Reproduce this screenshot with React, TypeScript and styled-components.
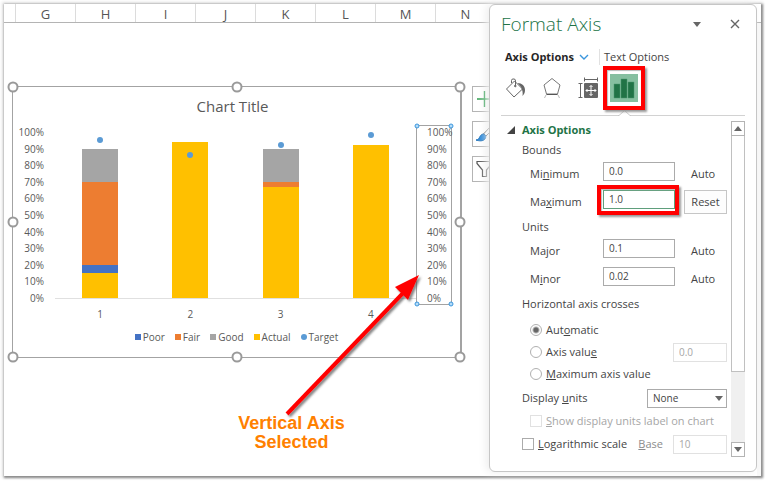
import React, { useState } from "react";
import styled, { createGlobalStyle, css } from "styled-components";

const GlobalStyle = createGlobalStyle`
  *, *::before, *::after { box-sizing: border-box; }
  body {
    margin: 0;
    background: #fff;
    color: #444;
    font-family: "Open Sans", "Noto Sans", sans-serif;
    font-size: 11px;
    line-height: 16px;
  }
  button, input, select { font: inherit; color: inherit; margin: 0; }
`;

/* ---------- window and worksheet ---------- */

const Page = styled.div`
  display: flex;
  min-height: 100vh;
  padding: 4px 7px 7px 4px;
`;

const Frame = styled.main`
  flex: 1;
  display: grid;
  grid-template-columns: minmax(0, 1fr) 268px 4px;
  grid-template-rows: 19px 1fr;
  background: #fff;
  box-shadow: 1px 1px 2px 1px #8c8c8c, 0 0 3px 2px #e4e4e4;
`;

const ColumnHeaders = styled.div`
  grid-area: 1 / 1 / 2 / 4;
  display: flex;
  overflow: hidden;
  border-bottom: 1px solid #b4b4b4;
`;

const ColumnHeader = styled.div<{ $narrow?: boolean }>`
  flex: 0 0 ${(p) => (p.$narrow ? "12px" : "60px")};
  border-right: 1px solid #dcdcdc;
  color: #555;
  font-size: 13px;
  line-height: 20px;
  text-align: center;
`;

const Sheet = styled.section`
  grid-area: 2 / 1 / 3 / 2;
  overflow: hidden;
  padding: 63px 0 0 8px;
`;

const ChartRow = styled.div`
  display: flex;
  gap: 10px;
`;

const ChartFrame = styled.figure`
  position: relative;
  flex: 1;
  margin: 0;
  border: 1px solid #a3a3a3;
  border-right-width: 2px;
  padding: 7px 8px 12px 0;
  background: #fff;
  color: #595959;
  font-size: 10px;
`;

const Handle = styled.span<{ $x: string; $y: string; $small?: boolean }>`
  position: absolute;
  left: ${(p) => p.$x};
  top: ${(p) => p.$y};
  width: ${(p) => (p.$small ? "5px" : "11px")};
  height: ${(p) => (p.$small ? "5px" : "11px")};
  transform: translate(-50%, -50%);
  border: ${(p) => (p.$small ? "1px solid #3a96dd" : "2px solid #9a9a9a")};
  border-radius: 50%;
  background: ${(p) => (p.$small ? "#b5dcf8" : "#fff")};
`;

const ChartTitle = styled.figcaption`
  margin-bottom: 7px;
  font-size: 15px;
  line-height: 24px;
  text-align: center;
`;

const PlotRow = styled.div`
  display: flex;
  height: 180px;
`;

const AxisLabels = styled.div<{ $selected?: boolean }>`
  position: relative;
  display: flex;
  flex-direction: column;
  justify-content: space-between;
  line-height: 12px;
  ${(p) =>
    p.$selected
      ? css`
          width: 36px;
          padding-left: 10px;
          border: 1px solid #a3a3a3;
        `
      : css`
          width: 31px;
          padding: 1px 0;
          text-align: right;
        `}
`;

const Plot = styled.div`
  flex: 1;
  display: grid;
  grid-template-columns: repeat(4, 1fr);
  margin: 7px 0 6px 11px;
  border-bottom: 1px solid #e0e0e0;
`;

const Category = styled.div`
  position: relative;
  display: flex;
  flex-direction: column;
  justify-content: flex-end;
  align-items: center;
`;

const Segment = styled.div<{ $fill: string }>`
  width: 40%;
  background: ${(p) => p.$fill};
`;

const Marker = styled.span`
  position: absolute;
  left: 50%;
  width: 6px;
  height: 6px;
  margin: 0 0 -3px -3px;
  border-radius: 50%;
  background: #5b9bd5;
`;

const CategoryLabels = styled.div`
  display: grid;
  grid-template-columns: repeat(4, 1fr);
  padding: 0 36px 0 42px;
  line-height: 18px;
  text-align: center;
`;

const Legend = styled.div`
  display: flex;
  justify-content: center;
  gap: 10px;
  margin-top: 6px;
  padding-left: 8px;
  line-height: 16px;
`;

const LegendItem = styled.span<{ $fill: string; $round?: boolean }>`
  display: flex;
  align-items: center;
  gap: 2px;
  &::before {
    content: "";
    width: 6px;
    height: 6px;
    border-radius: ${(p) => (p.$round ? "50%" : "0")};
    background: ${(p) => p.$fill};
  }
`;

const Arrow = styled.svg`
  position: absolute;
  right: 30px;
  top: 180px;
  z-index: 1;
  overflow: visible;
`;

const Note = styled.p`
  margin: 56px 0 0;
  padding-left: 82px;
  color: #ff8000;
  font: bold 18px/19px "Liberation Sans", Arial, sans-serif;
  text-align: center;
`;

const ChartTools = styled.div`
  flex: 0 0 17px;
  min-width: 0;
  display: flex;
  flex-direction: column;
  align-items: flex-start;
  gap: 9px;
`;

const ToolButton = styled.button`
  width: 26px;
  height: 26px;
  padding: 0;
  border: 1px solid #b4b4b4;
  background: #fff;
  line-height: 0;
  text-align: left;
`;

/* ---------- format pane ---------- */

const Pane = styled.aside`
  grid-area: 1 / 2 / 3 / 3;
  z-index: 2;
  display: flex;
  flex-direction: column;
  margin-bottom: 4px;
  padding: 0 11px 14px;
  border: 1px solid #c6c6c6;
  border-radius: 6px;
  background: #fff;
  box-shadow: -3px 0 8px #eee;
`;

const Gutter = styled.div`
  grid-area: 2 / 3 / 3 / 4;
  background: #f8f8f8;
`;

const PaneHeader = styled.header`
  display: flex;
  align-items: center;
  height: 40px;
  padding-bottom: 2px;
`;

const PaneTitle = styled.h1`
  flex: 1;
  margin: 0;
  color: #217346;
  font-size: 19px;
  font-weight: 300;
  line-height: 28px;
`;

const PlainButton = styled.button`
  display: grid;
  place-items: center;
  width: 20px;
  height: 20px;
  padding: 0;
  border: 0;
  background: none;
`;

const HeaderButtons = styled.div`
  display: flex;
  gap: 18px;
`;

const Tabs = styled.nav`
  display: flex;
  align-items: center;
  height: 24px;
  padding-left: 4px;
`;

const Tab = styled.button<{ $active?: boolean }>`
  display: flex;
  align-items: center;
  gap: 5px;
  padding: 0;
  border: 0;
  background: none;
  color: ${(p) => (p.$active ? "#262626" : "#444")};
  font-weight: ${(p) => (p.$active ? 700 : 400)};
  line-height: 16px;
  & + & {
    margin-left: 10px;
    padding-left: 4px;
    border-left: 1px solid #e1e1e1;
  }
`;

const IconRow = styled.div`
  display: flex;
  align-items: center;
  gap: 8px;
  height: 41px;
  padding: 0 0 3px 1px;
`;

const IconButton = styled.button<{ $active?: boolean }>`
  display: block;
  width: 28px;
  height: 28px;
  padding: 0;
  border: 0;
  background: ${(p) => (p.$active ? "#86bfa0" : "none")};
  line-height: 0;
`;

const Highlight = styled.div<{ $gap: string }>`
  position: relative;
  &::after {
    content: "";
    position: absolute;
    inset: ${(p) => p.$gap};
    border: 4px solid #f00;
    box-shadow: 2px 2px 2px #999, inset 1px 1px 1px #bbb;
    pointer-events: none;
  }
`;

const Divider = styled.div`
  display: flex;
  align-items: flex-end;
  height: 6px;
  margin-bottom: 5px;
  &::before, &::after {
    content: "";
    flex: 0 0 117px;
    height: 1px;
    background: #d2d2d2;
  }
  &::after { flex: 1; }
`;

const PaneBody = styled.div`
  flex: 1;
  display: flex;
  gap: 4px;
`;

const Options = styled.form`
  flex: 1;
  padding-left: 21px;
`;

const Heading = styled.h2`
  display: flex;
  align-items: center;
  gap: 7px;
  margin: 0 0 0 -15px;
  color: #217346;
  font-size: 11px;
  line-height: 18px;
`;

const Caption = styled.div`
  line-height: 21px;
`;

const FieldRow = styled.div`
  display: grid;
  grid-template-columns: 1fr 72px 52px;
  align-items: center;
  height: 28px;
  padding-left: 8px;
`;

const TextBox = styled.input<{ $focused?: boolean }>`
  display: block;
  width: 100%;
  height: 19px;
  padding: 0 5px;
  border: 1px solid ${(p) => (p.$focused ? "#5f9f7c" : "#ababab")};
  border-radius: 0;
  background: #fff;
  font-size: 10px;
  outline: none;
  &:disabled { border-color: #e1e1e1; color: #a6a6a6; }
`;

const FieldBox = styled.div`
  padding-bottom: 6px;
`;

const Status = styled.span`
  padding-left: 16px;
`;

const ResetButton = styled.button`
  height: 24px;
  margin-left: 9px;
  padding: 0;
  border: 1px solid #c6c6c6;
  background: #fdfdfd;
`;

const Choices = styled.fieldset`
  margin: 0;
  padding: 0 0 0 8px;
  border: 0;
`;

const ChoicesTitle = styled.legend`
  margin-left: -8px;
  padding: 0 0 5px;
  line-height: 21px;
`;

const Line = styled.div<{ $height: number; $indent?: boolean }>`
  display: flex;
  align-items: center;
  justify-content: space-between;
  height: ${(p) => p.$height}px;
  padding-left: ${(p) => (p.$indent ? "8px" : "0")};
`;

const Choice = styled.label<{ $dim?: boolean }>`
  display: flex;
  align-items: center;
  gap: 4px;
  color: ${(p) => (p.$dim ? "#a6a6a6" : "#444")};
  white-space: nowrap;
`;

const Radio = styled.input`
  appearance: none;
  width: 12px;
  height: 12px;
  border: 1px solid #b0b0b0;
  border-radius: 50%;
  background: #fff;
  &:checked { background: radial-gradient(circle, #666 0 2px, #fff 4px); }
`;

const Check = styled.input`
  appearance: none;
  width: 12px;
  height: 12px;
  border: 1px solid #ababab;
  background: #fff;
  &:disabled { border-color: #e1e1e1; }
`;

const SmallField = styled.div`
  width: 54px;
`;

const BaseLabel = styled.label`
  margin-left: auto;
  margin-right: 10px;
  color: #8c8c8c;
`;

const SelectBox = styled.div`
  display: grid;
  width: 80px;
  align-items: center;
  & > * { grid-area: 1 / 1; }
  & > svg { justify-self: end; margin-right: 4px; pointer-events: none; }
`;

const Select = styled.select`
  appearance: none;
  height: 19px;
  padding: 0 5px;
  border: 1px solid #ababab;
  border-radius: 0;
  background: #fff;
  font-size: 10px;
`;

const ScrollBar = styled.div`
  flex: 0 0 14px;
  display: flex;
  flex-direction: column;
  background: #f0f0f0;
`;

const ScrollTrack = styled.div`
  flex: 1;
  display: flex;
  flex-direction: column;
`;

const ScrollThumb = styled.div`
  flex: 0 0 77%;
  border: 1px solid #c0c0c0;
  border-top: 0;
  background: #fff;
`;

const ScrollButton = styled.button`
  display: grid;
  place-items: center;
  height: 15px;
  padding: 0;
  border: 1px solid #b4b4b4;
  background: #fff;
`;

const Triangle = ({ up }: { up?: boolean }) => (
  <svg width="8" height="5" viewBox="0 0 8 5" fill="#666" aria-hidden="true">
    <path d={up ? "M0 5L4 0L8 5Z" : "M0 0H8L4 5Z"} />
  </svg>
);

const BLUE = "#4472c4";
const ORANGE = "#ed7d31";
const GRAY = "#a5a5a5";
const GOLD = "#ffc000";

const letters = ["G", "H", "I", "J", "K", "L", "M", "N"];
const ticks = [100, 90, 80, 70, 60, 50, 40, 30, 20, 10, 0];

const categories = [
  { target: 95, parts: [[GRAY, 20], [ORANGE, 50], [BLUE, 5], [GOLD, 15]] },
  { target: 86, parts: [[GOLD, 94]] },
  { target: 92, parts: [[GRAY, 20], [ORANGE, 3], [GOLD, 67]] },
  { target: 98, parts: [[GOLD, 92]] },
] as { target: number; parts: [string, number][] }[];

const frameHandles = [
  ["0%", "0%"], ["50%", "0%"], ["100%", "0%"],
  ["0%", "50%"], ["100%", "50%"],
  ["0%", "100%"], ["50%", "100%"], ["100%", "100%"],
];

const axisHandles = [["0%", "0%"], ["100%", "0%"], ["0%", "100%"], ["100%", "100%"]];

function Chart() {
  return (
    <ChartFrame>
      <ChartTitle>Chart Title</ChartTitle>
      <PlotRow>
        <AxisLabels>
          {ticks.map((t) => <span key={t}>{t}%</span>)}
        </AxisLabels>
        <Plot>
          {categories.map((c, i) => (
            <Category key={i}>
              {c.parts.map(([fill, size], j) => (
                <Segment key={j} $fill={fill} style={{ height: `${size}%` }} />
              ))}
              <Marker style={{ bottom: `${c.target}%` }} />
            </Category>
          ))}
        </Plot>
        <AxisLabels $selected>
          {ticks.map((t) => <span key={t}>{t}%</span>)}
          {axisHandles.map(([x, y]) => <Handle key={x + y} $x={x} $y={y} $small />)}
        </AxisLabels>
      </PlotRow>
      <CategoryLabels>
        {categories.map((_, i) => <span key={i}>{i + 1}</span>)}
      </CategoryLabels>
      <Legend>
        <LegendItem $fill={BLUE}>Poor</LegendItem>
        <LegendItem $fill={ORANGE}>Fair</LegendItem>
        <LegendItem $fill={GRAY}>Good</LegendItem>
        <LegendItem $fill={GOLD}>Actual</LegendItem>
        <LegendItem $fill="#5b9bd5" $round>Target</LegendItem>
      </Legend>
      {frameHandles.map(([x, y]) => <Handle key={x + y} $x={x} $y={y} />)}
      <Arrow width="144" height="148" viewBox="0 0 144 148" aria-hidden="true">
        <defs>
          <filter id="arrow-shadow" x="-10%" y="-10%" width="130%" height="130%">
            <feDropShadow dx="2" dy="2" stdDeviation="1.2" floodColor="#555" floodOpacity="0.7" />
          </filter>
        </defs>
        <g filter="url(#arrow-shadow)">
          <path d="M1 147L120 23" stroke="#f00" strokeWidth="4" />
          <path d="M133 8L109 20L122 33Z" fill="#f00" />
        </g>
      </Arrow>
    </ChartFrame>
  );
}

export default function App() {
  const [minimum, setMinimum] = useState("0.0");
  const [maximum, setMaximum] = useState("1.0");
  const [major, setMajor] = useState("0.1");
  const [minor, setMinor] = useState("0.02");
  const [cross, setCross] = useState("auto");
  const [log, setLog] = useState(false);

  return (
    <Page>
      <GlobalStyle />
      <Frame>
        <ColumnHeaders>
          <ColumnHeader $narrow />
          {letters.map((l) => <ColumnHeader key={l}>{l}</ColumnHeader>)}
        </ColumnHeaders>
        <Sheet>
          <ChartRow>
            <Chart />
            <ChartTools>
              <ToolButton aria-label="Chart elements">
                <svg width="24" height="24" viewBox="0 0 24 24" fill="none" stroke="#2f9e4f" strokeWidth="1.4">
                  <path d="M4 12H19M11.500 4V20" />
                </svg>
              </ToolButton>
              <ToolButton aria-label="Chart styles">
                <svg width="24" height="24" viewBox="0 0 24 24" fill="none">
                  <path d="M10.500 12L18 4L21 6L13 14Z" fill="#fff" stroke="#555" />
                  <path d="M3 18C7 18 6 13 10 12C13 12.500 13.500 14.500 12 17C10 19.500 6 19 3 18Z" fill="#2b88d8" stroke="#1b6fb8" />
                </svg>
              </ToolButton>
              <ToolButton aria-label="Chart filters">
                <svg width="24" height="24" viewBox="0 0 24 24" fill="none" stroke="#555" strokeWidth="1.2">
                  <path d="M4 4.500H19V6.500L13.500 13V19.500H9.500V13L4 6.500Z" />
                </svg>
              </ToolButton>
            </ChartTools>
          </ChartRow>
          <Note>Vertical Axis<br />Selected</Note>
        </Sheet>

        <Pane>
          <PaneHeader>
            <PaneTitle>Format Axis</PaneTitle>
            <HeaderButtons>
              <PlainButton aria-label="Pane options"><Triangle /></PlainButton>
              <PlainButton aria-label="Close">
                <svg width="10" height="10" viewBox="0 0 10 10" stroke="#666" strokeWidth="1.4">
                  <path d="M1 1L9 9M9 1L1 9" />
                </svg>
              </PlainButton>
            </HeaderButtons>
          </PaneHeader>
          <Tabs>
            <Tab $active>
              Axis Options
              <svg width="10" height="6" viewBox="0 0 10 6" fill="none" stroke="#3a96dd" strokeWidth="1.4">
                <path d="M1 1L5 5L9 1" />
              </svg>
            </Tab>
            <Tab>Text Options</Tab>
          </Tabs>
          <IconRow>
            <IconButton aria-label="Fill and line">
              <svg width="28" height="28" viewBox="0 0 28 28" fill="none" stroke="#666">
                <path d="M12.500 7L4.500 15L12 23L20.500 15Z" />
                <path d="M9.500 9V6.500Q9.500 5 11 5H12Q13.500 5 13.500 7V11.500" />
                <circle cx="13.300" cy="12" r="0.800" fill="#666" />
                <path d="M15.500 9C20 9 23 12 23 16C23 19 22 20.500 20.500 22C21 19 20.500 16 19 13Z" fill="#666" stroke="none" />
              </svg>
            </IconButton>
            <IconButton aria-label="Effects">
              <svg width="28" height="28" viewBox="0 0 28 28" fill="none" stroke="#777">
                <path d="M14 4.500L22 11L19.500 20H8.500L6 11Z" />
                <path d="M8.500 20.500H19.500" stroke="#555" />
                <path d="M8 21L6.500 24M20 21L21.500 24" stroke="#bbb" />
              </svg>
            </IconButton>
            <IconButton aria-label="Size and properties">
              <svg width="28" height="28" viewBox="0 0 28 28" fill="none" stroke="#666">
                <path d="M10.500 5.500H23.500M10.500 3.500V7.500M23.500 3.500V7.500M6.500 10V23.500M4.500 9.500H8.500M4.500 23.500H8.500" />
                <rect x="10" y="9" width="14" height="15" rx="1" fill="#666" stroke="none" />
                <path d="M12 16.500H22M17 11.500V21.500M15.500 13L17 11.500L18.500 13M15.500 20L17 21.500L18.500 20M13.500 15L12 16.500L13.500 18M20.500 15L22 16.500L20.500 18" stroke="#fff" />
              </svg>
            </IconButton>
            <Highlight $gap="-8px -7px">
              <IconButton $active aria-label="Axis options">
                <svg width="28" height="28" viewBox="0 0 28 28" fill="#217346" stroke="#4f9a70" strokeWidth="0.5">
                  <path d="M4 10H10V24H4Z M11 5H17V24H11Z M18 8H24V24H18Z" />
                </svg>
              </IconButton>
            </Highlight>
          </IconRow>
          <Divider>
            <svg width="13" height="6" viewBox="0 0 13 6" fill="none" stroke="#c8c8c8">
              <path d="M0 5.500H1L6.500 0.500L12 5.500H13" />
            </svg>
          </Divider>
          <PaneBody>
            <Options>
              <Heading>
                <svg width="8" height="8" viewBox="0 0 8 8" fill="#444" aria-hidden="true">
                  <path d="M8 0V8H0Z" />
                </svg>
                Axis Options
              </Heading>
              <Caption>Bounds</Caption>
              <FieldRow>
                <label htmlFor="minimum">Mi<u>n</u>imum</label>
                <FieldBox><TextBox id="minimum" value={minimum} onChange={(e) => setMinimum(e.target.value)} /></FieldBox>
                <Status>Auto</Status>
              </FieldRow>
              <FieldRow>
                <label htmlFor="maximum">Ma<u>x</u>imum</label>
                <FieldBox>
                  <Highlight $gap="-5px -4px -6px -6px">
                    <TextBox id="maximum" $focused autoFocus value={maximum} onChange={(e) => setMaximum(e.target.value)} />
                  </Highlight>
                </FieldBox>
                <ResetButton type="button">Reset</ResetButton>
              </FieldRow>
              <Caption>Units</Caption>
              <FieldRow>
                <label htmlFor="major">Ma<u>j</u>or</label>
                <FieldBox><TextBox id="major" value={major} onChange={(e) => setMajor(e.target.value)} /></FieldBox>
                <Status>Auto</Status>
              </FieldRow>
              <FieldRow>
                <label htmlFor="minor">M<u>i</u>nor</label>
                <FieldBox><TextBox id="minor" value={minor} onChange={(e) => setMinor(e.target.value)} /></FieldBox>
                <Status>Auto</Status>
              </FieldRow>
              <Choices>
                <ChoicesTitle>Horizontal axis crosses</ChoicesTitle>
                <Line $height={22}>
                  <Choice>
                    <Radio type="radio" name="cross" checked={cross === "auto"} onChange={() => setCross("auto")} />
                    <span>Aut<u>o</u>matic</span>
                  </Choice>
                </Line>
                <Line $height={22}>
                  <Choice>
                    <Radio type="radio" name="cross" checked={cross === "value"} onChange={() => setCross("value")} />
                    <span>Axis valu<u>e</u></span>
                  </Choice>
                  <SmallField><TextBox aria-label="Axis value" disabled value="0.0" readOnly /></SmallField>
                </Line>
                <Line $height={22}>
                  <Choice>
                    <Radio type="radio" name="cross" checked={cross === "max"} onChange={() => setCross("max")} />
                    <span><u>M</u>aximum axis value</span>
                  </Choice>
                </Line>
              </Choices>
              <Line $height={26}>
                <label htmlFor="units">Display <u>u</u>nits</label>
                <SelectBox>
                  <Select id="units" defaultValue="None">
                    <option>None</option>
                    <option>Hundreds</option>
                    <option>Thousands</option>
                  </Select>
                  <Triangle />
                </SelectBox>
              </Line>
              <Line $height={20} $indent>
                <Choice $dim>
                  <Check type="checkbox" disabled />
                  <span><u>S</u>how display units label on chart</span>
                </Choice>
              </Line>
              <Line $height={26}>
                <Choice>
                  <Check type="checkbox" checked={log} onChange={() => setLog(!log)} />
                  <span><u>L</u>ogarithmic scale</span>
                </Choice>
                <BaseLabel htmlFor="base"><u>B</u>ase</BaseLabel>
                <SmallField><TextBox id="base" disabled value="10" readOnly /></SmallField>
              </Line>
            </Options>
            <ScrollBar>
              <ScrollButton aria-label="Scroll up"><Triangle up /></ScrollButton>
              <ScrollTrack><ScrollThumb /></ScrollTrack>
              <ScrollButton aria-label="Scroll down"><Triangle /></ScrollButton>
            </ScrollBar>
          </PaneBody>
        </Pane>
        <Gutter />
      </Frame>
    </Page>
  );
}
